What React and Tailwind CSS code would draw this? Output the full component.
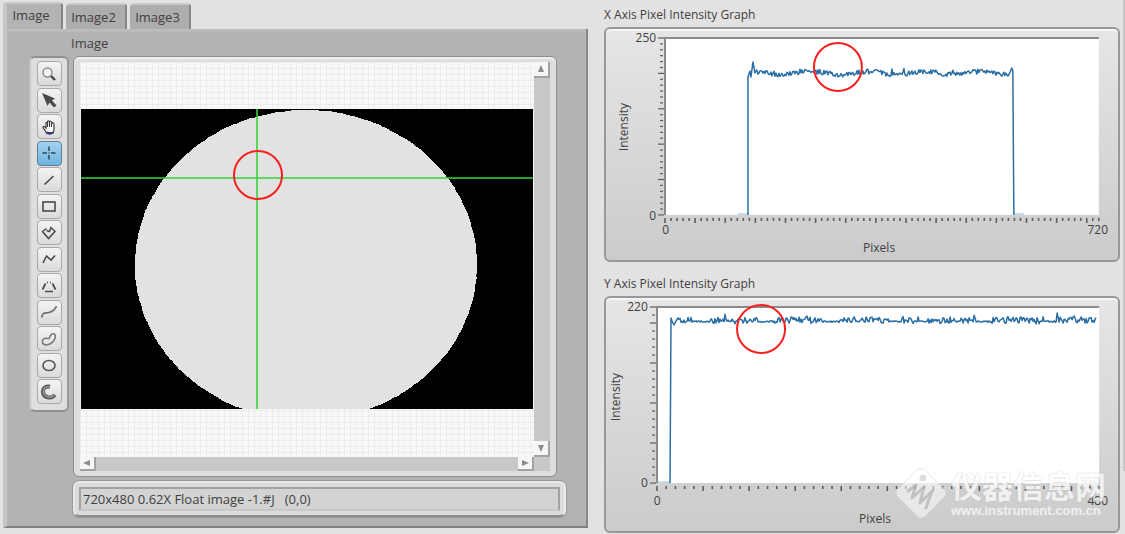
import React, { useState } from 'react';
import clsx from 'clsx';

const TABS = ['Image', 'Image2', 'Image3'];

const TOOLS = [
  {
    name: 'Zoom',
    icon: (
      <>
        <circle cx="6.500" cy="6.500" r="4.500" fill="#f4f4f4" stroke="#8a8a8a" strokeWidth="1.4" />
        <path d="M10 10 L14 14" stroke="#444" strokeWidth="2.4" />
      </>
    ),
  },
  {
    name: 'Pointer',
    icon: <path d="M1 1 L14 6.500 L11 8.500 L15.500 13.500 L13 15.500 L8.500 10.500 L6.500 14 Z" fill="#4a4a4a" />,
  },
  {
    name: 'Pan',
    icon: (
      <>
        <path
          d="M5 13 L2 8.5 Q2 7 4 8 L5 9 V4 Q5.500 2.500 6.500 4 V2.500 Q7.500 1 8.500 2.500 V3 Q9.500 1.500 10.500 3 V4.500 Q12 3 13 5 V10 Q13 12 12 14 Z"
          fill="#f8f8f8"
          stroke="#3c3c3c"
          strokeWidth="1.2"
        />
        <path d="M6.500 4 V8 M8.500 3 V8 M10.500 4 V8" stroke="#3c3c3c" />
        <path d="M5 13.500 Q8.500 16 12 13.500" fill="none" stroke="#33338a" strokeWidth="2" />
      </>
    ),
  },
  {
    name: 'Point',
    icon: <path d="M8 1.500 V6 M8 10 V14.500 M1.500 8 H6 M10 8 H14.500 M7.500 8 H8.500" stroke="#2f4652" strokeWidth="1.5" />,
  },
  {
    name: 'Line',
    icon: <path d="M3.500 12.500 L12.500 4" stroke="#4a4a4a" strokeWidth="1.6" />,
  },
  {
    name: 'Rectangle',
    icon: <rect x="2" y="4" width="12" height="9" fill="none" stroke="#4a4a4a" strokeWidth="1.6" />,
  },
  {
    name: 'Polygon',
    icon: <path d="M5.500 3.500 L1.500 6.500 L7.500 13.500 L14 6.500 L10 2.500 L8.500 6.500 L5.500 5.500" fill="none" stroke="#4a4a4a" strokeWidth="1.5" />,
  },
  {
    name: 'Broken line',
    icon: <path d="M2 12 L5.500 5 L10 9 L14 4.500" fill="none" stroke="#4a4a4a" strokeWidth="1.6" />,
  },
  {
    name: 'Trapezoid',
    icon: <path d="M1.500 11.500 L4.500 5.500 M6 4.500 H7 M9 4.500 H10 M11.500 5.500 L14.500 11.500 M4 13.500 H12" fill="none" stroke="#4a4a4a" strokeWidth="1.7" />,
  },
  {
    name: 'Freehand line',
    icon: <path d="M0.500 13.500 C2 7.500 4 9.500 8 8.500 S14 6 15.500 2" fill="none" stroke="#707070" strokeWidth="1.7" />,
  },
  {
    name: 'Freehand region',
    icon: (
      <path
        d="M8.500 7 C9 3 13 1.500 14 4 C15.500 8 11 13.500 5.500 14 C1 14 0.500 10 2.500 8 C4.500 6 6.500 8.500 8.500 7 Z"
        fill="none"
        stroke="#7a7a7a"
        strokeWidth="1.6"
      />
    ),
  },
  {
    name: 'Oval',
    icon: <ellipse cx="8" cy="8.500" rx="6" ry="5" fill="none" stroke="#555" strokeWidth="1.6" />,
  },
  {
    name: 'Annulus',
    icon: (
      <>
        <path d="M9 2.800 C4 1.500 1.500 5 2 8.500 C2.500 13.500 10 15.500 14 11" fill="none" stroke="#5a5a5a" strokeWidth="4" />
        <path d="M8.500 2.800 C4.500 2 2 5 2.500 8.500 C3 13 10 14.500 13 11.500" fill="none" stroke="#a5a5a5" strokeWidth="1.2" />
      </>
    ),
  },
];

// small seeded generator so the traces stay the same on each render
const createRandom = (seed) => {
  let s = seed;
  return () => {
    s = (s * 16807) % 2147483647;
    return s / 2147483647;
  };
};

const buildXTrace = () => {
  const rand = createRandom(41);
  const points = ['92,185', '92,47', '94,41', '95,47', '97,32', '99,43'];
  for (let x = 100; x <= 354; x += 1) {
    const drift = Math.sin(x / 9) * 1.5;
    const spike = rand() > 0.97 ? -3 : 0;
    points.push(`${x},${(43 + drift + (rand() - 0.5) * 5 + spike).toFixed(1)}`);
  }
  points.push('356,38', '357,41', '358,185');
  return points.join(' ');
};

const buildYTrace = () => {
  const rand = createRandom(97);
  const points = ['22,184', '23,19', '24,22', '26,26', '28,22'];
  for (let x = 30; x <= 448; x += 1) {
    const busy = Math.sin(x / 11) + Math.sin(x / 5) > -0.6;
    let y = 22.5 + (rand() - 0.5) * 1.5;
    if (busy) y -= (rand() - 0.3) * 6;
    if (rand() > 0.97) y -= 4;
    points.push(`${x},${y.toFixed(1)}`);
  }
  return points.join(' ');
};

const buildSampleOutline = () => {
  const rand = createRandom(7);
  const points = [];
  for (let i = 0; i < 300; i += 1) {
    const a = (i / 300) * Math.PI * 2;
    const r = 1 + (rand() - 0.5) * 0.005;
    points.push(`${(226 + Math.cos(a) * 171 * r).toFixed(1)},${(203 + Math.sin(a) * 155 * r).toFixed(1)}`);
  }
  return points.join(' ');
};

const X_TRACE = buildXTrace();
const Y_TRACE = buildYTrace();
const SAMPLE = buildSampleOutline();

const Graph = ({ title, max, xMax, width, plotWidth, plotHeight, xTicks, yTicks, yMajor, trace, base, marker, labelClass, rangeClass, axisClass, children }) => {
  const bottom = 8 + plotHeight;
  return (
    <section>
      <h2 className="h-5 leading-5 mb-0.5">{title}</h2>
      <div className="relative flex rounded-md border-2 border-[#989898] bg-gradient-to-b from-[#e6e6e6] to-[#cbcbcb] pt-px pb-1 pr-2.5 shadow-[inset_0_2px_1px_#f6f6f6]">
        <div className={clsx('flex flex-1 justify-between', labelClass)}>
          <span className="self-center mb-8 [writing-mode:vertical-rl] rotate-180 leading-4">Intensity</span>
          <div className={clsx('flex flex-col justify-between items-end leading-4', rangeClass)}>
            <span>{max}</span>
            <span>0</span>
          </div>
        </div>
        <div className={width}>
          <svg viewBox={`0 0 ${plotWidth + 18} ${bottom + 9}`} className="block w-full">
            <rect x="9" y="8" width={plotWidth} height={plotHeight} fill="#fff" />
            <path d={`M9 ${bottom} V8 H${9 + plotWidth}`} fill="none" stroke="#8a8a8a" strokeWidth="2" />
            {Array.from({ length: yTicks + 1 }, (_, i) => {
              const y = bottom - (i * plotHeight) / yTicks;
              const major = i % yMajor === 0 || i === yTicks;
              return <path key={i} d={`M${major ? 2 : 4} ${y} H${major ? 8 : 7}`} stroke="#5c5c5c" strokeWidth="1.2" />;
            })}
            {Array.from({ length: xTicks + 1 }, (_, i) => {
              const x = 9 + (i * plotWidth) / xTicks;
              return <path key={i} d={`M${x} ${bottom + 3} V${bottom + (i % 5 === 0 ? 8 : 6)}`} stroke="#5c5c5c" strokeWidth="1.6" />;
            })}
            <path d={base} stroke="#b9cfe2" strokeWidth="1.5" />
            <polyline points={trace} fill="none" stroke="#2a6ea6" strokeWidth="1.5" strokeLinejoin="round" />
            <circle cx={marker[0]} cy={marker[1]} r="24" fill="none" stroke="#f8201f" strokeWidth="2" />
          </svg>
          <div className={clsx('flex justify-between pl-1.5 h-4 leading-3', axisClass)}>
            <span>0</span>
            <span>{xMax}</span>
          </div>
          <p className="text-center leading-4 pr-1.5">Pixels</p>
        </div>
        {children}
      </div>
    </section>
  );
};

const ScrollButton = ({ label, d, className }) => (
  <button
    type="button"
    aria-label={label}
    className={clsx('flex items-center justify-center bg-[#f6f6f6] border-r-2 border-b-2 border-[#a2a2a2]', className)}
  >
    <svg viewBox="0 0 8 8" className="size-2">
      <path d={d} fill="#8c8c8c" />
    </svg>
  </button>
);

const Watermark = () => (
  <div className="absolute right-3 bottom-3 flex items-center gap-1 text-white opacity-70">
    <svg viewBox="0 0 52 52" className="size-[52px]">
      <path
        d="M22 3 Q26 0 30 3 L50 23 Q52 26 50 29 L29 50 Q26 52 23 50 L2 29 Q0 26 2 23 Z"
        fill="#fff"
        fillOpacity="0.75"
        stroke="#dcdcdc"
      />
      <circle cx="28" cy="11" r="3.500" fill="#d2d2d2" />
      <path
        d="M13 24 L21 18 L17 31 L29 20 L25 36 L37 24 L31 41"
        fill="none"
        stroke="#bdbdbd"
        strokeWidth="3"
        strokeLinejoin="round"
        strokeLinecap="round"
      />
    </svg>
    <div>
      <p className="text-[31px] leading-9 font-bold font-['Noto_Sans_CJK_SC',sans-serif] [text-shadow:0_0_2px_#bbb]">仪器信息网</p>
      <p className="text-[13px] leading-4 font-bold font-['Liberation_Sans',sans-serif]">www.instrument.com.cn</p>
    </div>
  </div>
);

const App = () => {
  const [tab, setTab] = useState('Image');
  const [tool, setTool] = useState('Point');

  return (
    <div className="min-h-screen flex gap-[3px] bg-[#e2e2e2] pl-[3px] text-[12px] text-[#3f3f3f] font-['Open_Sans',sans-serif]">
      <div className="flex-1 grid grid-cols-[585fr_516fr] items-start gap-4">
        <main className="pt-0.5">
          <div role="tablist" className="flex items-end gap-[3px] h-[27px]">
            {TABS.map((name) => (
              <button
                key={name}
                type="button"
                role="tab"
                aria-selected={tab === name}
                onClick={() => setTab(name)}
                className={clsx(
                  'rounded-t-sm border-t-2 border-r-2 border-t-[#c9c9c9] border-r-[#858585] text-[13px] leading-4',
                  tab === name ? 'h-[27px] w-[60px] pb-1 pr-1.5 border-l-4 border-l-[#c6c6c6] bg-[#b3b3b3]' : 'h-[26px] w-[61px] pr-1 bg-[#adadad]'
                )}
              >
                {name}
              </button>
            ))}
          </div>

          <div className="flex flex-col bg-[#b3b3b3] border-l-4 border-r-2 border-b-2 border-l-[#c6c6c6] border-r-[#868686] border-b-[#808080] pt-1 pl-[22px] pr-5 pb-[9px] shadow-[inset_0_3px_2px_#bdbdbd]">
            <h1 className="h-[23px] pl-[42px] text-[13px] leading-5">Image</h1>
            <div className="flex items-start gap-1">
              <div
                role="toolbar"
                aria-label="Image tools"
                className="flex flex-col justify-between items-center w-10 h-[356px] shrink-0 rounded-md border-2 border-t-[#909090] border-l-[#c4c4c4] border-r-[#999] border-b-[#909090] bg-[#dedede] pt-[3px] pb-1.5"
              >
                {TOOLS.map(({ name, icon }) => (
                  <button
                    key={name}
                    type="button"
                    aria-label={name}
                    aria-pressed={tool === name}
                    onClick={() => setTool(name)}
                    className={clsx(
                      'flex items-center justify-center size-[25px] rounded-sm border',
                      tool === name
                        ? 'border-[#5d7f95] bg-gradient-to-b from-[#a4d2ef] to-[#6db4e0]'
                        : 'border-[#a9a9a9] bg-gradient-to-b from-[#f4f4f4] to-[#dadada]'
                    )}
                  >
                    <svg viewBox="0 0 16 16" className="size-4">{icon}</svg>
                  </button>
                ))}
              </div>

              <div className="flex-1 flex flex-col gap-1">
                <div className="mr-[9px] rounded-md border border-[#8e8e8e] bg-[#dedede] pt-[5px] pb-[5px] px-1.5 shadow-[inset_0_2px_1px_#f0f0f0]">
                  <div className="flex">
                    <svg viewBox="0 0 454 395" className="block flex-1 min-w-0" role="img" aria-label="Sample image">
                      <defs>
                        <pattern id="canvasGrid" width="6" height="6" patternUnits="userSpaceOnUse">
                          <rect width="6" height="6" fill="#f8f8f8" />
                          <path d="M0 0.500 H6 M0.500 0 V6" stroke="#ececec" />
                        </pattern>
                        <clipPath id="frame">
                          <rect x="1" y="47" width="452" height="300" />
                        </clipPath>
                      </defs>
                      <rect width="454" height="395" fill="url(#canvasGrid)" />
                      <g clipPath="url(#frame)">
                        <rect x="1" y="47" width="452" height="300" fill="#000" />
                        <polygon points={SAMPLE} fill="#e2e2e2" shapeRendering="crispEdges" />
                        <path d="M177 47 V347 M1 116 H453" stroke="#36d43a" strokeWidth="1.6" />
                      </g>
                      <circle cx="178" cy="113" r="24" fill="none" stroke="#f8201f" strokeWidth="2" />
                    </svg>
                    <div className="flex flex-col justify-between w-4 bg-[#c8c8c8]">
                      <ScrollButton label="Scroll up" d="M4 0 L7 7 H1 Z" className="size-4" />
                      <ScrollButton label="Scroll down" d="M1 1 H7 L4 8 Z" className="size-4" />
                    </div>
                  </div>
                  <div className="flex justify-between h-3.5 pr-4 bg-[#c8c8c8]">
                    <ScrollButton label="Scroll left" d="M7 1 V7 L0 4 Z" className="w-4" />
                    <ScrollButton label="Scroll right" d="M1 1 L8 4 L1 7 Z" className="w-4" />
                  </div>
                </div>

                <div className="rounded-md border-2 border-t-[#e8e8e8] border-l-[#e8e8e8] border-r-[#eee] border-b-[#8e8e8e] bg-[#dcdcdc] p-1 outline outline-[#999]">
                  <output className="block border-2 border-[#a3a3a3] border-b-[#c8c8c8] bg-[#d3d3d3] pl-0.5 text-[13px] leading-5 whitespace-pre">
                    {'720x480 0.62X Float image -1.#J   (0,0)'}
                  </output>
                </div>
              </div>
            </div>
          </div>
        </main>

        <aside className="flex flex-col gap-3 pt-[5px]">
          <Graph
            title="X Axis Pixel Intensity Graph"
            max={250}
            xMax={720}
            width="w-9/10"
            labelClass="pl-2.5"
            rangeClass="mb-8"
            plotWidth={434}
            plotHeight={177}
            xTicks={72}
            yTicks={30}
            yMajor={6}
            trace={X_TRACE}
            base="M82 184 H92 M358 184 H368"
            marker={[182, 37]}
          />
          <Graph
            title="Y Axis Pixel Intensity Graph"
            max={220}
            xMax={480}
            width="w-11/12"
            labelClass="pl-0.5"
            rangeClass="mb-9"
            axisClass="mt-[3px]"
            plotWidth={442}
            plotHeight={176}
            xTicks={48}
            yTicks={22}
            yMajor={5}
            trace={Y_TRACE}
            base="M10 183 H22"
            marker={[113, 30]}
          >
            <Watermark />
          </Graph>
        </aside>
      </div>
      <div className="w-0.5 h-[471px] bg-[#c6c6c6]" />
    </div>
  );
};

export default App;
